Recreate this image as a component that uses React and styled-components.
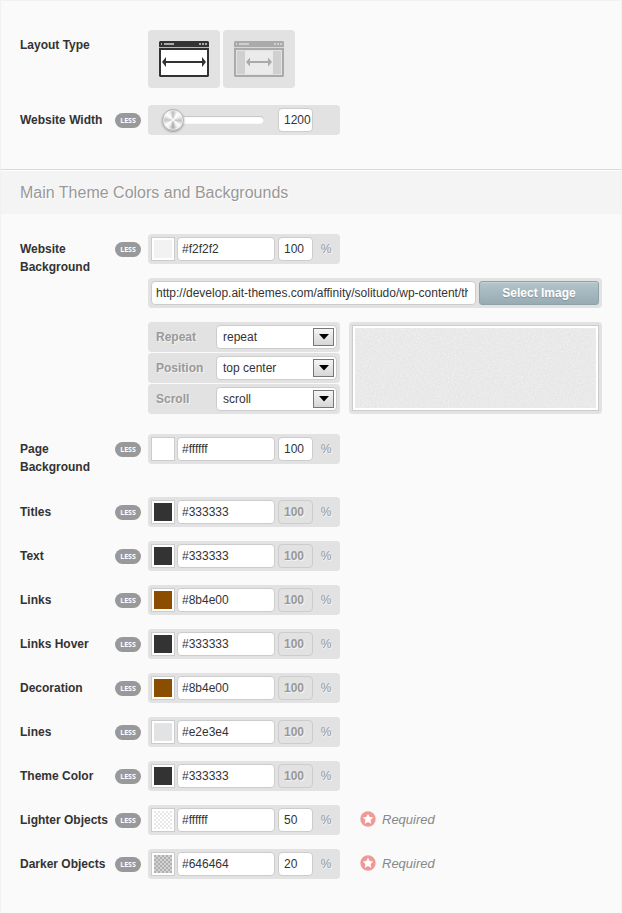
import React, { useState } from "react";
import styled, { createGlobalStyle } from "styled-components";

const GlobalStyle = createGlobalStyle`
  *, *::before, *::after { box-sizing: border-box; }
  body {
    margin: 0;
    background: #fff;
    color: #333;
    font-family: "Liberation Sans", Arial, sans-serif;
    font-size: 12px;
  }
  input, select, button { font-family: inherit; font-size: inherit; margin: 0; }
`;

const Page = styled.main`
  min-height: 100vh;
  background: #fafafa;
  border: 1px solid #f1f1f1;
  border-radius: 0 0 4px 4px;
`;

const Section = styled.section`
  padding: ${(p) => p.$top}px 19px 20px;
`;

const Heading = styled.h2`
  margin: 0;
  padding: 1px 19px 0;
  border-top: 1px solid #d9d9d9;
  box-shadow: inset 0 1px 0 #fff;
  background: #f4f4f4;
  color: #999;
  font-size: 16px;
  font-weight: normal;
  line-height: 43px;
  text-shadow: 1px 1px 0 #fff;
`;

const RowBox = styled.div`
  display: grid;
  grid-template-columns: 95px 33px minmax(0, 1fr);
  align-items: start;
  margin-bottom: ${(p) => p.$space}px;
`;

const Label = styled.label`
  padding: 6px 0 1px;
  font-weight: bold;
  line-height: 18px;
`;

const Badge = styled.span`
  display: block;
  width: 26px;
  height: 15px;
  margin-top: 8px;
  border-radius: 8px;
  background: #999;
  color: #fff;
  font: bold 7px/15px "Open Sans", sans-serif;
  text-align: center;
`;

const Controls = styled.div`
  display: flex;
  gap: 20px;
`;

const Stack = styled.div`
  display: grid;
  gap: 14px;
`;

const Panel = styled.div`
  display: flex;
  align-items: center;
  width: ${(p) => (p.$wide ? "100%" : "192px")};
  height: 30px;
  padding: 3px;
  border-radius: 4px;
  background: #e2e2e2;
`;

const TextField = styled.input`
  width: 98px;
  height: 24px;
  margin-right: 3px;
  padding: 0 4px;
  border: 1px solid #ccc;
  border-radius: 4px;
  background: #fff;
  color: #333;
  ${(p) => p.$grow && "flex: 1; min-width: 0; padding-right: 7px;"}
`;

const NumberField = styled(TextField)`
  width: 35px;
  margin-right: 0;
  padding: 0 0 0 5px;
  &:disabled {
    background: #e2e2e2;
    color: #999;
    font-weight: bold;
    text-shadow: 1px 1px 0 #f2f2f2;
  }
`;

const Unit = styled.span`
  flex: 1;
  padding-left: 2px;
  color: #999;
  text-align: center;
  text-shadow: 1px 1px 0 #f4f4f4;
`;

const Swatch = styled.button`
  width: 24px;
  height: 24px;
  margin-right: 2px;
  padding: 2px;
  border: 1px solid #ccc;
  background: #fff;
`;

const SwatchFill = styled.span`
  display: block;
  height: 18px;
  background: ${(p) =>
    p.$checks
      ? `repeating-conic-gradient(${p.$checks[0]} 0 25%, ${p.$checks[1]} 0 50%) 0 0 / 4px 4px`
      : p.$color};
`;

const LayoutChoices = styled.div`
  display: flex;
  gap: 3px;
`;

const LayoutButton = styled.button`
  display: grid;
  place-items: center;
  width: 72px;
  height: 58px;
  padding: 0;
  border: 0;
  border-radius: 4px;
  background: #e2e2e2;
`;

const Range = styled.input`
  appearance: none;
  width: 102px;
  height: 24px;
  margin: 0 14px 0 11px;
  background: transparent;
  &::-webkit-slider-runnable-track {
    height: 8px;
    border-radius: 4px;
    background: #fff;
    box-shadow: inset 0 1px 1px #c4c4c4, inset 0 0 1px #bbb;
  }
  &::-webkit-slider-thumb {
    appearance: none;
    width: 22px;
    height: 22px;
    margin-top: -7px;
    border: 1px solid #b2b2b2;
    border-radius: 50%;
    background: conic-gradient(
      #bbb, #fff 35deg, #f4f4f4 60deg, #c2c2c2 95deg, #fff 130deg, #eee 150deg,
      #a8a8a8 180deg, #eee 210deg, #fff 235deg, #c2c2c2 270deg, #fff 310deg, #f0f0f0 335deg, #bbb
    );
    box-shadow: 0 1px 2px #999, inset 0 0 1px 1px #f2f2f2;
  }
`;

const SelectImage = styled.button`
  width: 120px;
  height: 24px;
  padding: 0;
  border: 1px solid #8fa2aa;
  border-radius: 3px;
  background: linear-gradient(#b4c5cb, #97abb3);
  box-shadow: inset 0 1px 0 #c3d1d6;
  color: #fff;
  font-weight: bold;
  text-shadow: 0 1px 1px #82959d;
`;

const BackgroundOptions = styled.div`
  display: grid;
  grid-template-columns: 192px minmax(0, 1fr);
  gap: 9px;
`;

const OptionList = styled.div`
  display: grid;
  gap: 1px;
`;

const OptionLabel = styled.label`
  width: 65px;
  padding-left: 5px;
  color: #999;
  font-weight: bold;
  text-shadow: 1px 1px 0 #f2f2f2;
`;

const SelectBox = styled.div`
  display: grid;
  grid-template-columns: 1fr 21px;
  align-items: center;
  flex: 1;
  height: 24px;
  padding-right: 2px;
  border: 1px solid #ccc;
  border-radius: 4px;
  background: #fff;
`;

const Select = styled.select`
  grid-area: 1 / 1 / 2 / 3;
  appearance: none;
  height: 22px;
  padding: 0 24px 0 6px;
  border: 0;
  background: transparent;
  color: #333;
`;

const Arrow = styled.span`
  grid-area: 1 / 2;
  display: grid;
  place-items: center;
  height: 18px;
  border: 1px solid #777;
  background: linear-gradient(#f5f5f5, #d6d6d6);
  pointer-events: none;
`;

const PreviewFrame = styled.div`
  padding: 3px;
  border-radius: 4px;
  background: #e2e2e2;
`;

const Preview = styled.div`
  height: 86px;
  padding: 2px;
  border: 1px solid #ccc;
  background: #fff;
`;

const Texture = styled.svg`
  display: block;
  width: 100%;
  height: 100%;
  background: #e6e6e6;
`;

const Required = styled.span`
  display: flex;
  align-items: center;
  gap: 6px;
  height: 28px;
  color: #888;
  font-size: 13px;
  font-style: italic;
`;

function WindowIcon({ boxed }) {
  const ink = boxed ? "#aaa" : "#333";
  const dot = boxed ? "#d0d0d0" : "#aaa";
  return (
    <svg width="50" height="36" viewBox="0 0 50 36" aria-hidden="true">
      <path d="M1 0H49L50 1V35L49 36H1L0 35V1Z" fill={ink} />
      <path d="M0 6H50V7H0Z" fill={boxed ? "#d8d8d8" : "#bbb"} />
      <path d="M2 2h1v2h-1zM5 2h10v2h-10zM40 2h2v2h-2zM43 2h2v2h-2zM46 2h2v2h-2z" fill={dot} />
      <path d="M2 9H48V34H2Z" fill={boxed ? "#e2e2e2" : "#fff"} />
      {boxed && <path d="M3 10H11V33H3ZM39 10H47V33H39Z" fill="#d0d0d0" />}
      {boxed && <path d="M11 10H39V33H11Z" fill="#ebebeb" />}
      {boxed ? (
        <path d="M12 21L16 16.500V20H34V16.500L38 21L34 25.500V22H16V25.500Z" fill={ink} />
      ) : (
        <path d="M3 21L7 16V20H43V16L47 21L43 26V22H7V26Z" fill={ink} />
      )}
    </svg>
  );
}

function StarIcon() {
  return (
    <svg width="16" height="16" viewBox="0 0 16 16" aria-hidden="true">
      <circle cx="8" cy="8" r="7.700" fill="#ee9a97" />
      <path
        d="M8 2.800L9.600 6.100L13.200 6.600L10.600 9.100L11.200 12.700L8 11L4.800 12.700L5.400 9.100L2.800 6.600L6.400 6.100Z"
        fill="#fff"
      />
    </svg>
  );
}

function Row({ label, id, less = true, space = 14, children }) {
  return (
    <RowBox $space={space}>
      <Label htmlFor={id}>{label}</Label>
      <span>{less && <Badge>LESS</Badge>}</span>
      {children}
    </RowBox>
  );
}

function ColorPanel({ id, name, color, opacity, checks }) {
  return (
    <Panel>
      <Swatch type="button" aria-label={`Pick ${name} color`}>
        <SwatchFill $color={color} $checks={checks} />
      </Swatch>
      <TextField id={id} defaultValue={color} />
      <NumberField
        aria-label={`${name} opacity`}
        defaultValue={opacity ?? 100}
        disabled={opacity === undefined}
      />
      <Unit>%</Unit>
    </Panel>
  );
}

function Option({ id, label, values }) {
  return (
    <Panel>
      <OptionLabel htmlFor={id}>{label}</OptionLabel>
      <SelectBox>
        <Select id={id}>
          {values.map((v) => (
            <option key={v}>{v}</option>
          ))}
        </Select>
        <Arrow>
          <svg width="10" height="6" viewBox="0 0 10 6" aria-hidden="true">
            <path d="M0 0H10L5 5.500Z" fill="#000" />
          </svg>
        </Arrow>
      </SelectBox>
    </Panel>
  );
}

const COLORS = [
  { name: "Titles", color: "#333333" },
  { name: "Text", color: "#333333" },
  { name: "Links", color: "#8b4e00" },
  { name: "Links Hover", color: "#333333" },
  { name: "Decoration", color: "#8b4e00" },
  { name: "Lines", color: "#e2e3e4" },
  { name: "Theme Color", color: "#333333" },
  { name: "Lighter Objects", color: "#ffffff", opacity: 50, checks: ["#fff", "#e8e8e8"], required: true },
  { name: "Darker Objects", color: "#646464", opacity: 20, checks: ["#d2d2d2", "#b0b0b0"], required: true },
];

export default function App() {
  const [width, setWidth] = useState(1200);
  return (
    <>
      <GlobalStyle />
      <Page>
        <Section $top={29}>
          <Row label="Layout Type" id="layout-wide" less={false} space={17}>
            <LayoutChoices>
              <LayoutButton id="layout-wide" type="button" aria-label="Wide layout" aria-pressed="true">
                <WindowIcon />
              </LayoutButton>
              <LayoutButton type="button" aria-label="Boxed layout" aria-pressed="false">
                <WindowIcon boxed />
              </LayoutButton>
            </LayoutChoices>
          </Row>
          <Row label="Website Width" id="site-width">
            <Panel>
              <Range
                type="range"
                id="site-width"
                min="1200"
                max="2000"
                value={width}
                onChange={(e) => setWidth(e.target.value)}
              />
              <NumberField
                aria-label="Website width in pixels"
                value={width}
                onChange={(e) => setWidth(e.target.value)}
              />
            </Panel>
          </Row>
        </Section>

        <Heading>Main Theme Colors and Backgrounds</Heading>

        <Section $top={20}>
          <Row label="Website Background" id="site-bg" space={20}>
            <Stack>
              <ColorPanel id="site-bg" name="Website Background" color="#f2f2f2" opacity={100} />
              <Panel $wide>
                <TextField
                  $grow
                  aria-label="Background image address"
                  defaultValue="http://develop.ait-themes.com/affinity/solitudo/wp-content/themes"
                />
                <SelectImage type="button">Select Image</SelectImage>
              </Panel>
              <BackgroundOptions>
                <OptionList>
                  <Option id="bg-repeat" label="Repeat" values={["repeat", "no-repeat"]} />
                  <Option id="bg-position" label="Position" values={["top center", "top left"]} />
                  <Option id="bg-scroll" label="Scroll" values={["scroll", "fixed"]} />
                </OptionList>
                <PreviewFrame>
                  <Preview>
                    <Texture aria-label="Background preview" role="img">
                      <filter id="grain" x="0" y="0" width="100%" height="100%">
                        <feTurbulence type="fractalNoise" baseFrequency="0.6" numOctaves="2" />
                        <feColorMatrix values="0 0 0 0 1  0 0 0 0 1  0 0 0 0 1  0.7 0 0 0 -0.22" />
                      </filter>
                      <rect width="100%" height="100%" filter="url(#grain)" />
                    </Texture>
                  </Preview>
                </PreviewFrame>
              </BackgroundOptions>
            </Stack>
          </Row>

          <Row label="Page Background" id="page-bg" space={20}>
            <ColorPanel id="page-bg" name="Page Background" color="#ffffff" opacity={100} />
          </Row>

          {COLORS.map(({ required, ...c }) => {
            const id = c.name.toLowerCase().replace(" ", "-");
            return (
              <Row key={id} label={c.name} id={id}>
                <Controls>
                  <ColorPanel id={id} {...c} />
                  {required && (
                    <Required>
                      <StarIcon />
                      Required
                    </Required>
                  )}
                </Controls>
              </Row>
            );
          })}
        </Section>
      </Page>
    </>
  );
}
